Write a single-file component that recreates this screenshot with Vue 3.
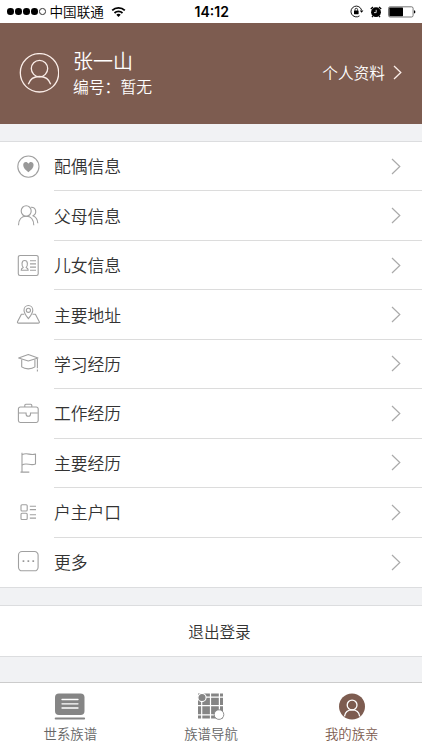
<template>
  <div class="page">
    <div class="status-bar">
      <div class="signal">
        <i v-for="n in 5" :key="n" :class="{ empty: n === 5 }"></i>
      </div>
      <span class="carrier">中国联通</span>
      <svg class="wifi" width="15" height="12" viewBox="0 0 15 12">
        <path d="M1.2 4.4a9 9 0 0 1 12.6 0M3.5 7a5.8 5.8 0 0 1 8 0" fill="none" stroke="#000" stroke-width="1.8" />
        <path d="M5.3 8.8a3.2 3.2 0 0 1 4.4 0L7.5 11z" />
      </svg>
      <span class="time">14:12</span>
      <div class="status-right">
        <svg width="14" height="13" viewBox="0 0 14 13">
          <path d="M11.6 5.2A5.4 5.4 0 1 0 9.5 10.9" fill="none" stroke="#000" stroke-width="0.9" />
          <path d="M9.8 5.4h3.6l-1.8 2.4z" />
          <rect x="4" y="5.6" width="4.6" height="3.6" rx="0.4" />
          <path d="M5 5.8V4.6a1.3 1.3 0 0 1 2.6 0v1.2" fill="none" stroke="#000" stroke-width="0.8" />
        </svg>
        <svg class="alarm" width="12" height="12" viewBox="0 0 12 12">
          <circle cx="6" cy="6.2" r="4.9" />
          <path d="M0.8 3 3 1M11.2 3 9 1M2.8 10.2l-.8 1M9.2 10.2l.8 1" stroke="#000" stroke-width="1.3" />
          <path d="M6.2 3.8v2.8H4" fill="none" stroke="#fff" stroke-width="0.8" />
        </svg>
        <svg class="battery" width="28" height="12" viewBox="0 0 28 12">
          <rect x="0.5" y="0.8" width="24.6" height="10.2" rx="1.6" fill="#fff" stroke="#555" stroke-width="0.8" />
          <rect x="1.3" y="1.6" width="13.7" height="8.6" rx="0.6" />
          <path d="M26 4.2q1.4.3 1.4 1.7T26 7.6z" />
        </svg>
      </div>
    </div>

    <div class="header">
      <svg class="avatar" width="40" height="40" viewBox="0 0 40 40">
        <circle cx="20.5" cy="19.8" r="19.2" />
        <circle cx="20.5" cy="15.6" r="8.2" />
        <path d="M9.3 31.3C11 26.1 14.800 23.500 20.500 23.500s9.500 2.600 11.200 7.800" />
      </svg>
      <div class="user">
        <div class="name">张一山</div>
        <div class="number">编号：暂无</div>
      </div>
      <div class="profile">
        <span>个人资料</span>
        <svg width="9" height="15" viewBox="0 0 9 15"><path d="M1 1l6.800 6.500L1 14" /></svg>
      </div>
    </div>

    <ul class="list">
      <li v-for="item in menus" :key="item.title">
        <svg class="icon" width="24" height="24" viewBox="0 0 24 24">
          <path v-for="(d, i) in item.lines" :key="i" :d="d" />
          <path v-if="item.fill" class="solid" :d="item.fill" />
        </svg>
        <div class="cell">
          <span>{{ item.title }}</span>
          <svg class="arrow" width="10" height="17" viewBox="0 0 10 17"><path d="M1 1l7.800 7.500L1 16" /></svg>
        </div>
      </li>
    </ul>

    <div class="logout">退出登录</div>

    <div class="tab-bar">
      <div class="tab">
        <svg width="32" height="28" viewBox="0 0 32 28">
          <rect x="1" y="0.5" width="29.500" height="21.500" rx="4" fill="#858585" />
          <path d="M8 6.500h16M8 10.800h16M8 15h16" stroke="#fff" stroke-width="1.300" stroke-linecap="round" />
          <path d="M1.600 25.500h28.600" stroke="#858585" stroke-width="1.800" stroke-linecap="round" />
        </svg>
        <span>世系族谱</span>
      </div>
      <div class="tab">
        <svg width="28" height="28" viewBox="0 0 28 28">
          <rect x="1" y="0.500" width="25" height="25" fill="#858585" />
          <path d="M4.700 0v27M13.500 0v27M22.400 0v27M0 4.200h27M0 12.600h27M0 21.800h27" stroke="#fff" stroke-width="1.200" />
          <circle cx="5" cy="4.500" r="4.100" fill="#858585" stroke="#fff" stroke-width="1.100" />
          <circle cx="22" cy="21.600" r="4.800" fill="#fff" stroke="#858585" stroke-width="0.900" />
        </svg>
        <span>族谱导航</span>
      </div>
      <div class="tab active">
        <svg width="28" height="28" viewBox="0 0 28 28">
          <circle cx="14" cy="13.500" r="13" fill="#7d5c50" />
          <g fill="none" stroke="#fff" stroke-width="1.300">
            <circle cx="14.100" cy="12" r="4.900" />
            <path d="M6.500 23.300c.7-4.400 3.200-6.400 7.600-6.400s6.900 2 7.600 6.400" />
          </g>
        </svg>
        <span>我的族亲</span>
      </div>
    </div>
  </div>
</template>

<script setup>
const menus = [
  {
    title: "配偶信息",
    lines: ["M12.4 1a10.6 10.6 0 1 0 0 21.2a10.6 10.6 0 1 0 0-21.2z"],
    fill: "M12.4 17.2C9.7 15 7.2 13 7.2 10 7.2 6.7 11 6.1 12.4 8.700c1.400-2.600 5.200-2 5.200 1.300 0 3-2.500 5-5.200 7.200z",
  },
  {
    title: "父母信息",
    lines: [
      "M10.2 1.700a5 5.300 0 1 0 0 10.600a5 5.300 0 1 0 0-10.600z",
      "M2.500 21.300c.2-5.600 2.600-9 7.700-9s7.400 3.400 7.600 9",
      "M14.900 3.200c5.600-.3 6.400 6.400 2 8.500 3 1.100 4.700 3.800 4.900 7.500",
    ],
  },
  {
    title: "儿女信息",
    lines: [
      "M4 1.500h16.500a1.700 1.700 0 0 1 1.700 1.700v16.600a1.700 1.700 0 0 1-1.700 1.700H4a1.700 1.700 0 0 1-1.700-1.700V3.200A1.700 1.700 0 0 1 4 1.500z",
      "M8.700 6.500c-3.600 0-3.100 5.400-1.400 6.900-1.400.5-2.100 1.200-2.100 2.800h7c0-1.600-.7-2.300-2.100-2.800C11.800 11.900 12.300 6.500 8.700 6.500z",
      "M14 6.700h6M14 9.900h6M14 13.100h6M14 16.300h6",
    ],
  },
  {
    title: "主要地址",
    lines: [
      "M12.400 15.700C10.100 12.600 8 10.200 8 7.200a4.400 4.700 0 0 1 8.800 0c0 3-2.100 5.400-4.400 8.500z",
      "M12.400 5.200a2.100 2.100 0 1 0 0 4.200a2.100 2.100 0 1 0 0-4.200z",
      "M8.300 11.200H5.400L1.500 18.800q-.3 1.300 1 1.300h19.800q1.300 0 1-1.300l-3.900-7.600h-2.900",
    ],
  },
  {
    title: "学习经历",
    lines: [
      "M12.300 2.600 22 5.900 12.300 9 2.600 5.900z",
      "M5.700 7.500v7.400c3.300 2.600 9.900 2.600 13.200 0V7.500",
      "M21.400 6.500v9.800M21.400 17.500v2",
    ],
  },
  {
    title: "工作经历",
    lines: [
      "M4.300 5h16a1.900 1.900 0 0 1 1.900 1.900v11.700a1.900 1.900 0 0 1-1.900 1.900h-16a1.900 1.900 0 0 1-1.900-1.900V6.900A1.900 1.900 0 0 1 4.300 5z",
      "M8.800 5V3.200a1 1 0 0 1 1-1h5a1 1 0 0 1 1 1V5",
      "M2.800 11h7.300M14.500 11h7.300M10.100 10.600v1.600a2.200 2 0 0 0 4.400 0v-1.600",
    ],
  },
  {
    title: "主要经历",
    lines: ["M6 1.800v19.300M4.500 21.100h8.800", "M6 3.800c5-3 8.200 1.200 13.500-.8v10c-5.300 2.200-8.500-1.900-13.500.9"],
  },
  {
    title: "户主户口",
    lines: [
      "M6 3.800h4.200a1 1 0 0 1 1 1v4.200a1 1 0 0 1-1 1H6a1 1 0 0 1-1-1V4.800a1 1 0 0 1 1-1z",
      "M6 12.300h4.200a1 1 0 0 1 1 1v4.200a1 1 0 0 1-1 1H6a1 1 0 0 1-1-1v-4.200a1 1 0 0 1 1-1z",
      "M13.800 5.200h6.200M13.800 8.600h6.200M13.800 13.700h6.200M13.800 17.100h6.200",
    ],
  },
  {
    title: "更多",
    lines: [
      "M6 1.500h12.600a3.500 3.500 0 0 1 3.500 3.500v12.300a3.500 3.500 0 0 1-3.500 3.500H6a3.500 3.500 0 0 1-3.500-3.500V5A3.500 3.500 0 0 1 6 1.500z",
    ],
    fill: "M6.600 10.300h1.700V12H6.600zM11.500 10.300h1.700V12h-1.700zM16.400 10.300h1.700V12h-1.700z",
  },
];
</script>

<style>
body {
  margin: 0;
}
</style>

<style scoped>
.page {
  width: 422px;
  height: 750px;
  box-sizing: border-box;
  display: flex;
  flex-direction: column;
  background: #f1f2f4;
  color: #333;
  font-family: "Noto Sans CJK SC", sans-serif;
  font-weight: 350;
  overflow: hidden;
}
svg {
  display: block;
  flex: none;
}
.status-bar {
  height: 23px;
  flex: none;
  display: flex;
  align-items: center;
  background: #fff;
  color: #000;
  padding: 0 6px 0 7px;
}
.signal {
  display: flex;
  gap: 1.4px;
}
.signal i {
  width: 6.6px;
  height: 6.6px;
  box-sizing: border-box;
  border-radius: 50%;
  background: #000;
}
.signal i.empty {
  background: none;
  border: 0.8px solid #333;
}
.carrier {
  margin-left: 4px;
  width: 55px;
  font-size: 13.6px;
  line-height: 23px;
  white-space: nowrap;
}
.wifi {
  margin-left: 6px;
}
.time {
  margin-left: 69px;
  font: 600 14px/23px Inter, "Liberation Sans", sans-serif;
}
.status-right {
  margin-left: auto;
  display: flex;
  align-items: center;
}
.alarm {
  margin-left: 6px;
}
.battery {
  margin-left: 6px;
}
.header {
  height: 101px;
  flex: none;
  box-sizing: border-box;
  display: flex;
  align-items: center;
  padding: 0 20px 2px 19px;
  background: #7d5c50;
  color: #fff;
}
.avatar,
.profile svg {
  fill: none;
  stroke: #fbeee9;
  stroke-width: 1.3;
}
.user {
  margin-left: 14px;
}
.name {
  font-size: 20px;
  line-height: 28px;
}
.number {
  font-size: 15.8px;
  line-height: 24px;
}
.profile {
  margin-left: auto;
  display: flex;
  align-items: center;
  font-size: 15.7px;
}
.profile svg {
  margin-left: 8px;
}
.list {
  margin: 17px 0 0;
  padding: 0;
  list-style: none;
  background: #fff;
  border-top: 1px solid #dcdddf;
  border-bottom: 1px solid #dcdddf;
}
.list li {
  display: flex;
  align-items: center;
  height: 49.45px;
  padding-left: 16px;
}
.icon {
  fill: none;
  stroke: #a0a0a0;
  stroke-width: 1.1;
  stroke-linejoin: round;
}
.icon .solid {
  fill: #999;
  stroke: none;
}
.cell {
  flex: 1;
  height: 100%;
  box-sizing: border-box;
  margin-left: 14px;
  padding-right: 21px;
  display: flex;
  align-items: center;
  justify-content: space-between;
  border-bottom: 1px solid #dcdcdc;
  font-size: 16.8px;
}
.list li:last-child .cell {
  border-bottom: none;
}
.arrow {
  fill: none;
  stroke: #aaa;
  stroke-width: 1.2;
}
.logout {
  height: 50px;
  flex: none;
  margin-top: 17px;
  border-top: 1px solid #dcdddf;
  border-bottom: 1px solid #dcdddf;
  background: #fff;
  font-size: 15.6px;
  line-height: 50px;
  text-align: center;
  text-indent: 17px;
}
.tab-bar {
  height: 68px;
  flex: none;
  box-sizing: border-box;
  margin-top: auto;
  display: flex;
  background: #fff;
  border-top: 1px solid #ccc;
}
.tab {
  flex: 1;
  display: flex;
  flex-direction: column;
  align-items: center;
  padding-top: 9.5px;
  font-size: 13.4px;
  line-height: 20px;
  color: #666;
}
.tab span {
  margin-top: 2.5px;
}
.tab.active {
  color: #7d5c50;
}
</style>
